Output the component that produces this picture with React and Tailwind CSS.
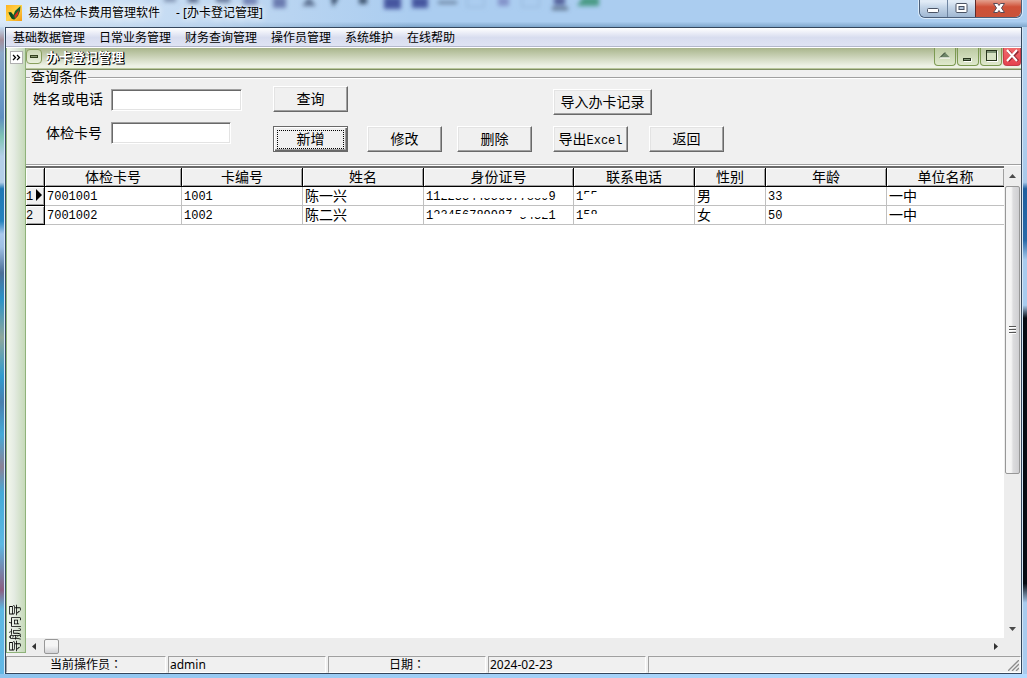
import React from "react";

const MENU = ["基础数据管理", "日常业务管理", "财务查询管理", "操作员管理", "系统维护", "在线帮助"];
const COLUMNS = ["体检卡号", "卡编号", "姓名", "身份证号", "联系电话", "性别", "年龄", "单位名称"];
const ROWS = [
  { card: "7001001", no: "1001", name: "陈一兴", id: "112233445566778899", phone: "155", sex: "男", age: "33", unit: "一中" },
  { card: "7001002", no: "1002", name: "陈二兴", id: "123456789987654321", phone: "158", sex: "女", age: "50", unit: "一中" },
];

const SONG = "font-['Liberation_Mono','Noto_Sans_CJK_SC',monospace]";
const UI = "font-['Noto_Sans','Noto_Sans_CJK_SC',sans-serif]";

function AppIcon() {
  return (
    <svg className="h-4 w-4 shrink-0" viewBox="0 0 16 16" aria-hidden="true">
      <defs>
        <linearGradient id="gold" x1="0" y1="0" x2="1" y2="1">
          <stop offset="0" stopColor="#ffb41f" />
          <stop offset="0.5" stopColor="#ffd24a" />
          <stop offset="1" stopColor="#f39b12" />
        </linearGradient>
      </defs>
      <rect width="16" height="16" fill="url(#gold)" />
      <path d="M2.500 7.500 5 7l2.500 3L9 6l5.500-5L14 6l-2 5-3.500 3.500L6 14l-2-3z" fill="#14602c" />
      <path d="M2.500 7.500 5.500 8 8 14.500 5.500 13z" fill="#0b4a22" />
      <path d="M13 5 11.800 10 9 13.500 8.300 10.500z" fill="#e02a1c" />
    </svg>
  );
}

function GlassBackdrop() {
  return (
    <svg className="pointer-events-none absolute inset-0 h-full w-full" aria-hidden="true">
      <defs>
        <filter id="soft" x="-50%" y="-100%" width="200%" height="300%">
          <feGaussianBlur stdDeviation="2" />
        </filter>
      </defs>
      <g filter="url(#soft)">
        <rect x="164" y="-4" width="12" height="6" fill="#8497b5" />
        <rect x="188" y="-4" width="10" height="7" fill="#5e7192" />
        <rect x="216" y="-4" width="14" height="7" fill="#6d80a2" />
        <rect x="243" y="-3" width="14" height="9" fill="#6f82b6" />
        <rect x="273" y="-3" width="13" height="11" fill="#6a7cb0" />
        <path d="M302 6 309-3l7 9z" fill="#5b7090" />
        <path d="M331-3h8l-6 10z" fill="#2f435f" />
        <rect x="359" y="-3" width="8" height="7" fill="#40546f" />
        <rect x="384" y="-3" width="17" height="12" fill="#4656a0" />
        <rect x="412" y="-3" width="16" height="11" fill="#4656a0" />
        <rect x="438" y="1" width="19" height="3" fill="#69819d" />
        <rect x="467" y="-4" width="17" height="11" fill="none" stroke="#92b1d4" />
        <rect x="498" y="-3" width="11" height="9" fill="#8494cb" />
        <rect x="522" y="-4" width="17" height="11" fill="none" stroke="#92b1d4" />
        <rect x="554" y="-3" width="11" height="8" fill="#54639b" />
        <rect x="552" y="7" width="16" height="3" fill="#53657f" />
        <path d="M577 6 583-3h16v9z" fill="#4b9b87" />
      </g>
    </svg>
  );
}

function CaptionButtons() {
  const base = "flex items-start justify-center bg-linear-to-b";
  const glass = "from-[#e1ebf6] from-10% via-[#c6d6e8] via-40% to-[#9fb7d2]";
  return (
    <div className="relative mr-[5px] flex h-[18px] rounded-b-md border border-t-0 border-[#4c5f79] shadow-[0_0_0_1px_#dcecfb]">
      <button aria-label="最小化" className={`${base} ${glass} w-7 rounded-bl-md border-r border-[#6e84a0]`}>
        <svg width="13" height="16" viewBox="0 0 13 16"><rect x="0.500" y="8.500" width="11" height="4" rx="1" fill="#fff" stroke="#4a5364" /></svg>
      </button>
      <button aria-label="还原" className={`${base} ${glass} w-[27px]`}>
        <svg width="13" height="16" viewBox="0 0 13 16">
          <rect x="1" y="3.500" width="11" height="9" rx="1" fill="#fff" stroke="#4a5364" />
          <rect x="4" y="6.500" width="5" height="3" fill="#b3c6dc" stroke="#4a5364" />
        </svg>
      </button>
      <button aria-label="关闭" className={`${base} w-[46px] rounded-br-md border-l border-[#5e2a2a] from-[#e3a08e] via-[#cf5138] via-40% to-[#c9533a]`}>
        <svg width="14" height="16" viewBox="0 0 14 16">
          <path d="M1.500 3.500h4L7 5.500l1.500-2h4L9.500 8l3 4.500h-4L7 10.500l-1.500 2h-4l3-4.500z" fill="#fff" stroke="#5a4a56" />
        </svg>
      </button>
    </div>
  );
}

function ChildTool({ label, close, children }) {
  return (
    <button
      aria-label={label}
      className={`flex h-[18px] items-start justify-center rounded-b-sm border border-t-0 bg-linear-to-b ${
        close ? "w-[18px] border-[#c43c48] from-[#ef6a6c] to-[#e5424f]" : "w-[22px] border-[#7c9a52] from-[#bccaa2] to-[#dfe9cd]"
      }`}
    >
      {children}
    </button>
  );
}

function ChildTitle() {
  return (
    <div className="flex h-[22px] shrink-0 items-start border-b border-[#7f8f62] bg-linear-to-b from-[#a9b58c] to-[#eef2e6] to-85% shadow-[inset_0_-1px_0_#b9c79c]">
      <button aria-label="窗口菜单" className="mt-px flex h-[15px] w-4 items-center justify-center rounded-sm border border-[#8aa05f] bg-linear-to-b from-[#cbd7b4] to-[#e9f0dc]">
        <svg width="8" height="5"><rect x="0.500" y="1.500" width="7" height="2" fill="#8c9b74" stroke="#33411f" /></svg>
      </button>
      <h1 className={`${UI} ml-1 flex-1 text-[13px] leading-[18px] font-bold text-white [text-shadow:1px_1px_0_#000,1px_0_0_#222]`}>办卡登记管理</h1>
      <div className="flex gap-px">
        <ChildTool label="卷起">
          <svg width="12" height="18"><path d="M1 9.500 6 4.500l5 5z" fill="#6d8568" /><path d="m1 9.500 5-5" stroke="#2c3c2c" /><path d="M1 10h10" stroke="#fff" /></svg>
        </ChildTool>
        <ChildTool label="最小化子窗口">
          <svg width="14" height="18"><rect x="2.500" y="10.500" width="7" height="2" fill="#7f9476" stroke="#26331c" /><path d="M3 13.500h7.500v-3" fill="none" stroke="#fff" /></svg>
        </ChildTool>
        <ChildTool label="最大化子窗口">
          <svg width="13" height="18"><path d="M12.500 3v10.500H2" fill="none" stroke="#fff" /><rect x="1.500" y="2.500" width="10" height="10" fill="#d6e2c3" stroke="#26331c" /><path d="M2 4h9" stroke="#7f9476" strokeWidth="2" /></svg>
        </ChildTool>
        <ChildTool label="关闭子窗口" close>
          <svg width="14" height="18"><path d="m3 3 10 10M13 3 3 13" stroke="#8d2831" strokeWidth="3" /><path d="m2 2 10 11M12 2 2 13" stroke="#fff" strokeWidth="2" /></svg>
        </ChildTool>
      </div>
    </div>
  );
}

function ActionButton({ focused, className = "w-[75px]", children }) {
  return (
    <button
      className={`h-[26px] border bg-[#f0f0f0] text-center text-[14px] leading-5 whitespace-nowrap text-black ${
        focused
          ? "border-[#696969] px-[3px] py-0.5 shadow-[inset_1px_1px_0_#fff,inset_-1px_-1px_0_#696969,inset_-2px_-2px_0_#a0a0a0]"
          : "border-t-white border-r-[#696969] border-b-[#696969] border-l-white pt-0.5 shadow-[inset_-1px_-1px_0_#a0a0a0,inset_1px_1px_0_#e3e3e3]"
      } ${className}`}
    >
      {focused ? <span className="flex h-[19px] items-center justify-center border border-dotted border-black pt-0.5">{children}</span> : children}
    </button>
  );
}

const FIELD =
  "h-[22px] border border-t-[#a0a0a0] border-r-white border-b-white border-l-[#a0a0a0] bg-white px-1 text-[14px] outline-none shadow-[inset_1px_1px_0_#696969,inset_-1px_-1px_0_#e3e3e3]";

function QueryPanel() {
  return (
    <section className={`${SONG} shrink-0 border-b border-[#a0a0a0] bg-[#f0f0f0] pb-3 text-[14px]`}>
      <div className="flex h-4 items-center">
        <span className="h-0.5 w-1 border-t border-[#a0a0a0] bg-white" />
        <h2 className="px-px leading-4">查询条件</h2>
        <span className="h-0.5 flex-1 border-t border-[#a0a0a0] bg-white" />
      </div>
      <div className="flex items-start">
        <form className="grid w-[247px] grid-cols-[77px_auto] items-center justify-items-start gap-x-2 gap-y-2.5 pt-[3px]">
          <label htmlFor="who" className="justify-self-end leading-[22px]">姓名或电话</label>
          <input id="who" className={`${FIELD} w-[131px]`} />
          <label htmlFor="card" className="justify-self-end pt-0.5 pr-px leading-[22px]">体检卡号</label>
          <input id="card" className={`${FIELD} w-[120px]`} />
        </form>
        <div className="grid grid-cols-[94px_90px_96px_96px_76px] items-start gap-y-[11px]">
          <ActionButton>查询</ActionButton>
          <div className="col-span-2 col-start-4 pt-[3px]">
            <ActionButton className="w-[99px]">导入办卡记录</ActionButton>
          </div>
          <ActionButton focused>新增</ActionButton>
          <ActionButton>修改</ActionButton>
          <ActionButton>删除</ActionButton>
          <ActionButton>导出<span className="text-[12px]">Excel</span></ActionButton>
          <ActionButton>返回</ActionButton>
        </div>
      </div>
    </section>
  );
}

// Sensitive digits are partly covered by white masks laid over the text.
function Masked({ text, masks }) {
  return (
    <span className="relative inline-block h-4 align-top leading-4">
      {text}
      {masks.map((m) => (
        <span key={m} className={`absolute bg-white ${m}`} />
      ))}
    </span>
  );
}

const ID_MASKS = [
  ["top-0 left-[15px] h-[9px] w-[108px]"],
  ["top-[6px] left-[8px] h-[10px] w-[78px]", "top-0 left-[86px] h-4 w-[8px]", "top-0 left-[94px] h-[9px] w-[28px]"],
];
const PHONE_MASKS = [["top-[5px] left-[8px] h-[11px] w-4"], ["top-[6px] left-[8px] h-[10px] w-4"]];

function CardTable() {
  const cell = "h-[19px] overflow-hidden border-r border-b border-[#c0c0c0] p-0 pt-0.5 pl-0.5 leading-4 whitespace-nowrap";
  const head = "h-[19px] border-r border-b border-black bg-[#f0f0f0] p-0 pt-0.5 leading-4 font-normal shadow-[inset_1px_1px_0_#fff,inset_-1px_-1px_0_#a0a0a0]";
  return (
    <table className={`${SONG} w-full table-fixed border-separate border-spacing-0 text-[12px]`}>
      <colgroup>
        <col className="w-[19px]" />
        <col className="w-[137px]" />
        <col className="w-[121px]" />
        <col className="w-[121px]" />
        <col className="w-[150px]" />
        <col className="w-[121px]" />
        <col className="w-[71px]" />
        <col className="w-[121px]" />
        <col />
      </colgroup>
      <thead>
        <tr>
          <th className={head} />
          {COLUMNS.map((c) => (
            <th key={c} className={`${head} text-[14px] last:border-r-0`}>{c}</th>
          ))}
        </tr>
      </thead>
      <tbody>
        {ROWS.map((r, i) => (
          <tr key={r.card}>
            <th className={head}>
              <span className="flex items-center justify-between pr-0.5">
                {i + 1}
                {i === 0 && <svg className="mb-1" width="6" height="12" viewBox="0 0 6 12" aria-hidden="true"><path d="M0 0v12l6-6z" /></svg>}
              </span>
            </th>
            <td className={cell}>{r.card}</td>
            <td className={cell}>{r.no}</td>
            <td className={`${cell} text-[14px]`}>{r.name}</td>
            <td className={cell}><Masked text={r.id} masks={ID_MASKS[i]} /></td>
            <td className={cell}><Masked text={r.phone} masks={PHONE_MASKS[i]} /></td>
            <td className={`${cell} text-[14px]`}>{r.sex}</td>
            <td className={cell}>{r.age}</td>
            <td className={`${cell} border-r-0 text-[14px]`}>{r.unit}</td>
          </tr>
        ))}
      </tbody>
    </table>
  );
}

function VerticalScroll() {
  return (
    <div className="flex w-[17px] shrink-0 flex-col items-center bg-[#ededed]">
      <div className="flex h-5 items-center"><svg width="7" height="4"><path d="M0 4 3.500 0 7 4z" fill="#4a4a4a" /></svg></div>
      <div className="flex min-h-0 flex-1 flex-col">
        <div className="flex h-[66.5%] w-[15px] items-center justify-center rounded-xs border border-[#979797] bg-linear-to-r from-[#f5f5f5] from-40% via-[#dcdcde] via-55% to-[#cfcfd2]">
          <svg width="7" height="9"><path d="M0 1.500h7M0 4.500h7M0 7.500h7" stroke="#555" /><path d="M0 2.500h7M0 5.500h7M0 8.500h7" stroke="#fff" /></svg>
        </div>
      </div>
      <div className="flex h-[19px] items-center"><svg width="7" height="4"><path d="M0 0h7L3.500 4z" fill="#4a4a4a" /></svg></div>
    </div>
  );
}

function StatusCell({ center, className = "", children }) {
  return (
    <div className={`h-[17px] border border-t-[#a0a0a0] border-r-white border-b-white border-l-[#a0a0a0] px-px leading-4 ${center ? "text-center font-['Noto_Sans','Noto_Sans_CJK_TC',sans-serif]" : ""} ${className}`}>
      {children}
    </div>
  );
}

export default function App() {
  return (
    <div className={`${UI} relative flex h-screen flex-col overflow-hidden bg-[#b5d6f7] text-[12px] text-black`}>
      <header className="relative flex h-[27px] shrink-0 items-start justify-between bg-linear-to-b from-[#abcdf0] from-80% to-[#7fa6cb]">
        <div className="absolute inset-0 bg-linear-to-r from-[#e7f1fb] via-[#c7dcf2] via-20% to-transparent to-40% opacity-80" />
        <GlassBackdrop />
        <div className="relative flex items-center gap-1.5 pt-1 pl-[6px]">
          <AppIcon />
          <div className="flex gap-4 leading-[18px] whitespace-pre [text-shadow:0_0_6px_#fff,0_0_8px_#fff]">
            <span>易达体检卡费用管理软件</span>
            <span>- [办卡登记管理]</span>
          </div>
        </div>
        <CaptionButtons />
      </header>

      <div className="flex min-h-0 flex-1">
        <div className="w-[5px] shrink-0 border-r border-[#d5e7f6] bg-[linear-gradient(to_bottom,#c3dcf3_0%,#a58f9b_2%,#8da9c8_4%,#6f9cc8_10%,#5f8fc0_14%,#7fc5b4_17%,#b4cfe8_20%,#b4cfe8_24%,#1f78b4_25%,#2583be_30%,#a9c8ec_32%,#9fc0e4_34%,#4b6f98_38%,#2a93c8_42%,#8fa79b_48%,#2f9bcf_54%,#4a7fae_58%,#45aad8_63%,#8c8296_68%,#45aad8_72%,#5db8e2_80%,#8c5f82_87%,#5db8e2_90%,#62b7e5_100%)]" />
        <div className="flex min-w-0 flex-1 flex-col border border-[#34465c] bg-[#f0f0f0]">
          <nav className="flex h-5 shrink-0 items-center gap-3.5 border-b border-white bg-linear-to-b from-white via-[#d8ddef] via-50% to-[#e0e4f4] pl-[7px] whitespace-nowrap shadow-[inset_0_-1px_0_#b4b8cc]">
            {MENU.map((m) => (
              <a key={m} href="#" className="leading-[18px]">{m}</a>
            ))}
          </nav>

          <div className="flex min-h-0 flex-1">
            <aside className="mb-0.5 flex w-5 shrink-0 flex-col items-center justify-between border-x border-b border-[#8fb27a] bg-linear-to-r from-[#f3f8ec] via-[#e4ebe2] via-40% to-[#c6dab9] pt-[3px]">
              <button aria-label="展开导航" className="flex h-[13px] w-[13px] shrink-0 items-center justify-center border border-[#b0b0b0] bg-white">
                <svg width="9" height="7"><path d="m1 1 2.500 2.500L1 6M5 1l2.500 2.500L5 6" fill="none" stroke="#000" strokeWidth="1.300" /></svg>
              </button>
              <span className="rotate-180 leading-4 [text-orientation:sideways] [writing-mode:vertical-rl]">导航向导</span>
            </aside>

            <main className="flex min-w-0 flex-1 flex-col">
              <ChildTitle />
              <QueryPanel />
              <div className="flex min-h-0 flex-1 border-t border-t-white bg-white">
                <div className="min-w-0 flex-1 border-t-2 border-[#696969]">
                  <CardTable />
                </div>
                <VerticalScroll />
              </div>
              <div className="flex h-[17px] shrink-0 items-center bg-[#ededed] pr-[23px] pl-1.5">
                <svg width="4" height="7"><path d="M4 0v7L0 3.500z" fill="#333" /></svg>
                <div className="ml-2 h-[15px] w-[15px] rounded-xs border border-[#979797] bg-linear-to-b from-[#f5f5f5] from-45% to-[#d2d2d5]" />
                <svg className="ml-auto" width="4" height="7"><path d="M0 0v7l4-3.500z" fill="#333" /></svg>
              </div>
            </main>
          </div>

          <footer className="relative flex shrink-0 gap-0.5 pt-px">
            <StatusCell center className="w-[160px]">当前操作员：</StatusCell>
            <StatusCell className="w-[158px]">admin</StatusCell>
            <StatusCell center className="w-[158px]">日期：</StatusCell>
            <StatusCell className="w-[158px]">2024-02-23</StatusCell>
            <StatusCell className="flex-1" />
            <svg className="absolute right-0.5 bottom-0.5" width="11" height="11" aria-hidden="true">
              <path d="M0 11 11 0M4 11l7-7M8 11l3-3" stroke="#8c8c8c" strokeWidth="1.300" />
            </svg>
          </footer>
        </div>
        <div className="w-[5px] shrink-0 border-l border-[#d5e7f6] bg-[linear-gradient(to_bottom,#b8d4f0_0%,#a9c9ea_24%,#1f5f9f_25%,#2a6aa8_33%,#a9cbee_36%,#a9cbee_43%,#070b12_45%,#070b12_86%,#a9cbee_89%)]" />
      </div>
      <div className="h-1 shrink-0 bg-linear-to-r from-[#8fc4ee] to-[#b5dbff]" />
    </div>
  );
}
